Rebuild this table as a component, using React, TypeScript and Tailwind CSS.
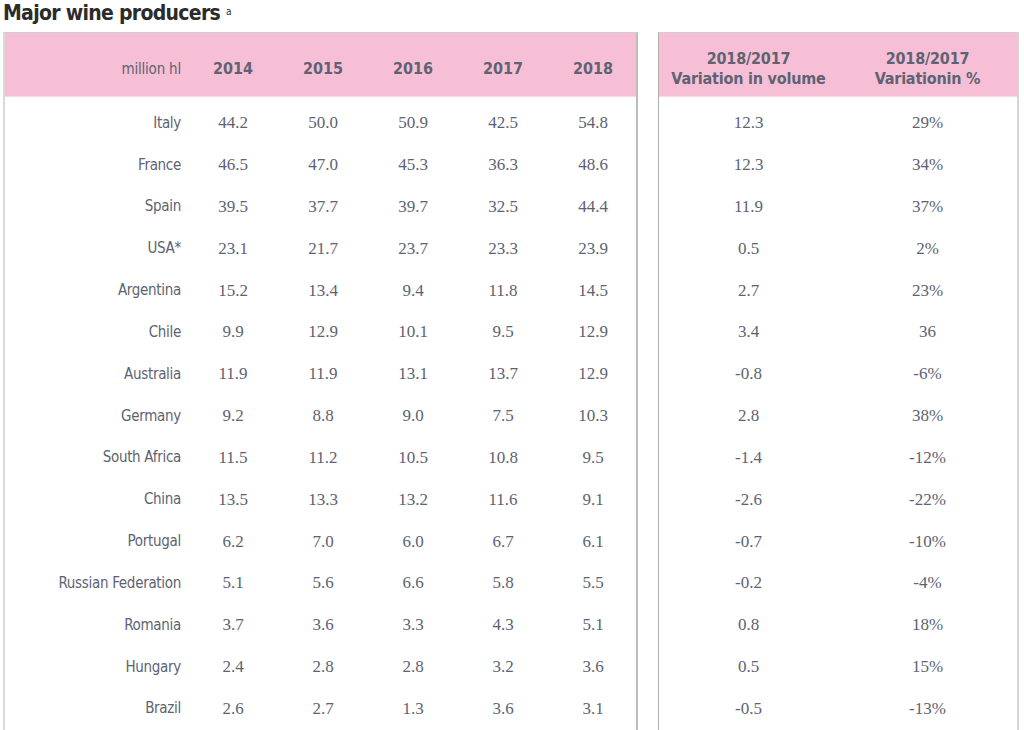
const rows: [string, string[], string, string][] = [
  ["Italy", ["44.2", "50.0", "50.9", "42.5", "54.8"], "12.3", "29%"],
  ["France", ["46.5", "47.0", "45.3", "36.3", "48.6"], "12.3", "34%"],
  ["Spain", ["39.5", "37.7", "39.7", "32.5", "44.4"], "11.9", "37%"],
  ["USA*", ["23.1", "21.7", "23.7", "23.3", "23.9"], "0.5", "2%"],
  ["Argentina", ["15.2", "13.4", "9.4", "11.8", "14.5"], "2.7", "23%"],
  ["Chile", ["9.9", "12.9", "10.1", "9.5", "12.9"], "3.4", "36"],
  ["Australia", ["11.9", "11.9", "13.1", "13.7", "12.9"], "\u20110.8", "\u20116%"],
  ["Germany", ["9.2", "8.8", "9.0", "7.5", "10.3"], "2.8", "38%"],
  ["South Africa", ["11.5", "11.2", "10.5", "10.8", "9.5"], "-1.4", "-12%"],
  ["China", ["13.5", "13.3", "13.2", "11.6", "9.1"], "-2.6", "-22%"],
  ["Portugal", ["6.2", "7.0", "6.0", "6.7", "6.1"], "\u20110.7", "-10%"],
  ["Russian Federation", ["5.1", "5.6", "6.6", "5.8", "5.5"], "\u20110.2", "\u20114%"],
  ["Romania", ["3.7", "3.6", "3.3", "4.3", "5.1"], "0.8", "18%"],
  ["Hungary", ["2.4", "2.8", "2.8", "3.2", "3.6"], "0.5", "15%"],
  ["Brazil", ["2.6", "2.7", "1.3", "3.6", "3.1"], "\u20110.5", "-13%"],
];

const years = ["2014", "2015", "2016", "2017", "2018"];

const cond = "font-['DejaVu_Sans_Condensed','DejaVu_Sans',sans-serif] [font-stretch:condensed]";
const serif = "font-['Liberation_Serif',serif]";

export default function App() {
  return (
    <div className="h-[730px] w-[1024px] overflow-hidden bg-white text-[#5d6372]">
      <h1 className={`${cond} pl-[3px] text-[21px] font-bold leading-[26px] tracking-[-0.7px] text-[#2b2b2b]`}>
        Major wine producers <sup className="text-[10px] font-normal">a</sup>
      </h1>
      <div className="mt-[6px] flex pl-[3px]">
        <div className="w-[635px] border-t border-l-2 border-r-2 border-t-[#cfcfcf] border-l-[#d9d9d9] border-r-[#bcbcbc]">
          <div className={`${cond} grid h-[64px] grid-cols-[183px_repeat(5,90px)] items-center border-b border-b-[#fbd8e6] bg-[#f7bfd6] pt-[9px]`}>
            <div className="pr-[7px] text-right text-[15px] font-light tracking-[-0.2px]">million hl</div>
            {years.map((y) => (
              <div key={y} className="text-center text-[16px] font-bold">
                {y}
              </div>
            ))}
          </div>
          <div className="pt-[5px]">
            {rows.map(([name, vals]) => (
              <div key={name} className="grid h-[41.85px] grid-cols-[183px_repeat(5,90px)] items-center">
                <div className={`${cond} pr-[7px] text-right text-[15px] tracking-[-0.3px]`}>{name}</div>
                {vals.map((v, i) => (
                  <div key={i} className={`${serif} text-center text-[17px]`}>
                    {v}
                  </div>
                ))}
              </div>
            ))}
          </div>
        </div>
        <div className="ml-[20px] w-[361px] border-t border-l border-r-2 border-t-[#cfcfcf] border-l-[#b0b0b0] border-r-[#d6d6d6]">
          <div className={`${cond} grid h-[64px] grid-cols-2 items-center border-b border-b-[#fbd8e6] bg-[#f7bfd6] pt-[8px] text-center text-[16px] font-bold leading-[20px] tracking-[-0.2px]`}>
            <div>
              2018/2017
              <br />
              Variation in volume
            </div>
            <div>
              2018/2017
              <br />
              Variationin %
            </div>
          </div>
          <div className="pt-[5px]">
            {rows.map(([name, , vol, pct]) => (
              <div key={name} className={`${serif} grid h-[41.85px] grid-cols-2 items-center text-center text-[17px]`}>
                <div>{vol}</div>
                <div>{pct}</div>
              </div>
            ))}
          </div>
        </div>
      </div>
    </div>
  );
}
